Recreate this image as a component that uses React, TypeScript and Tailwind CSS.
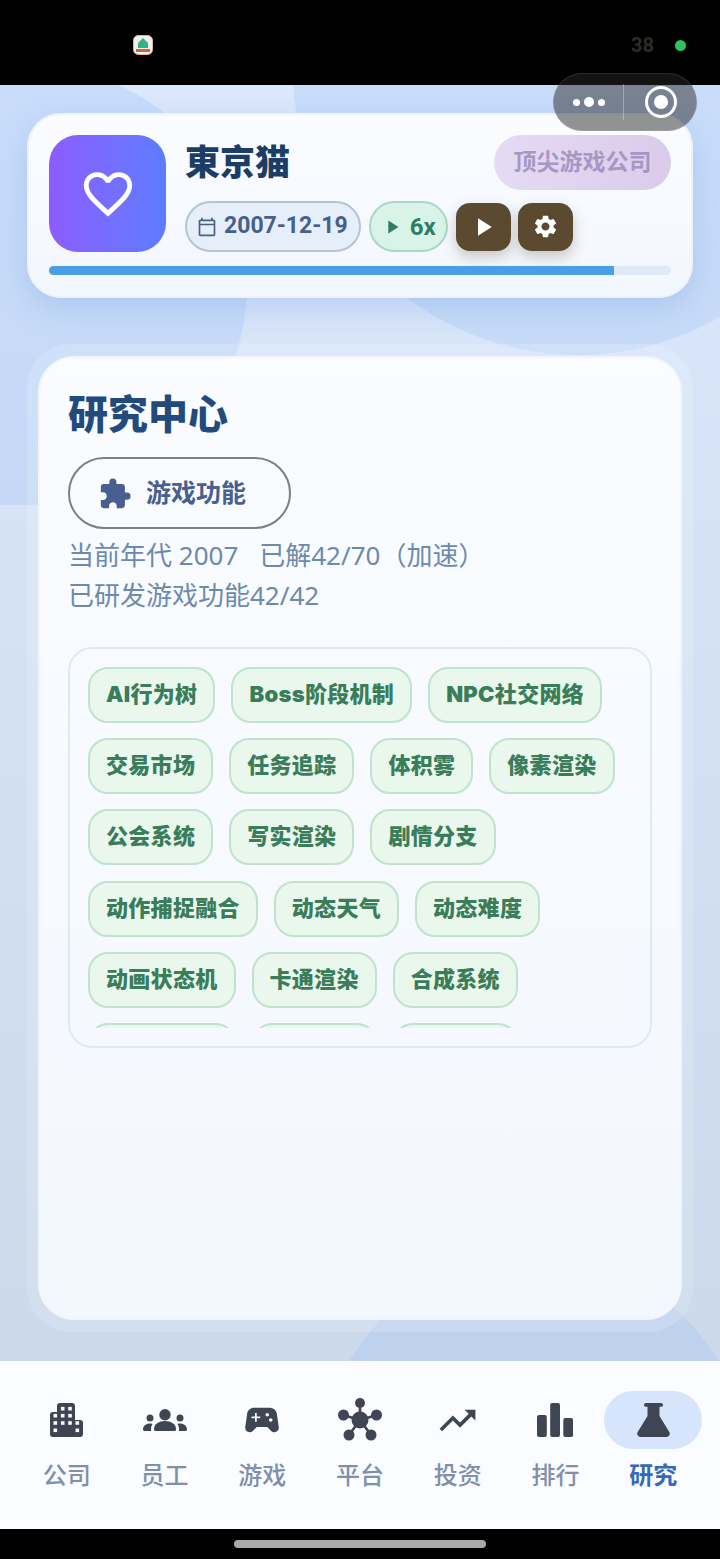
import {
  MdExtension,
  MdFavoriteBorder,
  MdOutlineCalendarToday,
  MdPlayArrow,
  MdSettings,
  MdSportsEsports,
  MdTrendingUp,
} from 'react-icons/md';

const chips = [
  'AI行为树', 'Boss阶段机制', 'NPC社交网络',
  '交易市场', '任务追踪', '体积雾', '像素渲染',
  '公会系统', '写实渲染', '剧情分支',
  '动作捕捉融合', '动态天气', '动态难度',
  '动画状态机', '卡通渲染', '合成系统',
  '回合制战斗', '多人联机', '天气系统',
];

// window cells of the building icon, [x, y] centres
const windows = [
  [12.7, 5.7], [20, 5.7],
  [5.3, 12.7], [12.7, 12.7], [20, 12.7],
  [5.3, 20], [12.7, 20], [20, 20], [27.3, 20],
  [5.3, 27.3], [27.3, 27.3],
];

function BuildingIcon() {
  return (
    <svg width="33" height="34" viewBox="0 0 33 34" fill="currentColor">
      <path d="M3 9H7V3a3 3 0 0 1 3-3h12a3 3 0 0 1 3 3V17h5a3 3 0 0 1 3 3v11a3 3 0 0 1-3 3H3a3 3 0 0 1-3-3V12a3 3 0 0 1 3-3Z" />
      {windows.map(([x, y]) => (
        <rect key={`${x}-${y}`} x={x - 1.8} y={y - 1.8} width="3.6" height="3.6" fill="#fafcff" />
      ))}
    </svg>
  );
}

function PeopleIcon() {
  return (
    <svg width="44" height="22" viewBox="0 0 44 22" fill="currentColor">
      <circle cx="22" cy="5.7" r="5.7" />
      <circle cx="7" cy="9" r="3.5" />
      <circle cx="37" cy="9" r="3.5" />
      <path d="M11 20c0-5 5-8 11-8s11 3 11 8v.5a1.5 1.5 0 0 1-1.5 1.5h-19a1.5 1.5 0 0 1-1.5-1.5Z" />
      <path d="M9.5 15c-1 1.5-1.5 3.5-1.5 5v2H1.5A1.5 1.5 0 0 1 0 20.5C0 17 3 14.5 7 14.5c1 0 1.8.1 2.5.5Z" />
      <path d="M34.500 15c1 1.500 1.500 3.500 1.500 5v2h6.500a1.500 1.500 0 0 0 1.500-1.500C44 17 41 14.500 37 14.500c-1 0-1.800.1-2.500.5Z" />
    </svg>
  );
}

function HubIcon() {
  return (
    <svg width="44" height="44" viewBox="0 0 44 44" fill="currentColor" stroke="currentColor" strokeWidth="0">
      <path d="M22 5 22 22M5 17 22 22M39 17 22 22M11 37 22 22M33 37 22 22" strokeWidth="2.600" fill="none" />
      <circle cx="22" cy="22" r="8.500" />
      <circle cx="22" cy="5" r="5" />
      <circle cx="5.500" cy="17" r="5.500" />
      <circle cx="38.500" cy="17" r="5.500" />
      <circle cx="11" cy="37" r="5.500" />
      <circle cx="33" cy="37" r="5.500" />
    </svg>
  );
}

function BarsIcon() {
  return (
    <svg width="36" height="34" viewBox="0 0 36 34" fill="currentColor">
      <rect x="0" y="12" width="9.800" height="22" rx="2" />
      <rect x="13.200" y="0" width="9.800" height="34" rx="2" />
      <rect x="26.300" y="15" width="9.800" height="19" rx="2" />
    </svg>
  );
}

function FlaskIcon() {
  return (
    <svg width="33" height="34" viewBox="0 0 33 34" fill="currentColor">
      <rect x="7" y="0" width="19" height="3.800" rx="1.900" />
      <path d="M10.500 3H22.500V13L32.300 29A3.300 3.300 0 0 1 29.500 34H3.500A3.300 3.300 0 0 1 .7 29L10.500 13Z" />
    </svg>
  );
}

const tabs = [
  { label: '公司', icon: <BuildingIcon /> },
  { label: '员工', icon: <PeopleIcon /> },
  { label: '游戏', icon: <MdSportsEsports size={42} /> },
  { label: '平台', icon: <HubIcon /> },
  { label: '投资', icon: <MdTrendingUp size={43} /> },
  { label: '排行', icon: <BarsIcon /> },
  { label: '研究', icon: <FlaskIcon />, active: true },
];

export default function App() {
  return (
    <div className="relative flex h-[1559px] w-[720px] flex-col overflow-hidden bg-black font-['Roboto','Noto_Sans_CJK_SC',sans-serif]">
      {/* status bar */}
      <div className="flex h-[85px] shrink-0 items-center pl-[133px] pr-[34px] pt-[5px]">
        <svg width="20" height="20" viewBox="0 0 20 20">
          <rect x="0.500" y="0.500" width="19" height="19" rx="5" fill="#f3efe9" stroke="#d8b9a8" />
          <path d="M10 3 15 8V13H5V8Z" fill="#2eb58a" />
          <rect x="3" y="14" width="14" height="3" fill="#d2613c" />
        </svg>
        <span className="ml-auto text-[20px] font-bold text-[#2c2c2c]">38</span>
        <div className="ml-[21px] h-[11px] w-[11px] rounded-full bg-[#2fc25f]" />
      </div>

      {/* page */}
      <div className="relative flex min-h-0 flex-1 flex-col overflow-hidden bg-gradient-to-b from-[#dbe8fd] to-[#ccd9eb] px-[27px] pt-[28px]">
        <div className="absolute left-[-307px] top-[-20px] h-[440px] w-[554px] rounded-full bg-[#a0c4f5]/30" />
        <div className="absolute left-[293px] top-[-300px] h-[570px] w-[570px] rounded-full bg-[#a0c4f5]/30" />
        <div className="absolute left-[319px] top-[1171px] h-[430px] w-[430px] rounded-full bg-[#a0c4f5]/30" />

        {/* header card */}
        <div className="relative flex h-[185px] shrink-0 flex-col rounded-[34px] border-2 border-[#edf3fd] bg-gradient-to-b from-[#fafcff] to-[#f3f7fe] px-[20px] pt-[20px] shadow-[0_10px_30px_rgba(90,140,210,0.25)]">
          <div className="flex">
            <div className="flex h-[117px] w-[117px] shrink-0 items-center justify-center rounded-[29px] bg-gradient-to-r from-[#8b5cff] to-[#5b7cff] text-white">
              <MdFavoriteBorder size={58} />
            </div>
            <div className="ml-[19px] flex min-w-0 flex-1 flex-col">
              <div className="flex h-[66px] items-start justify-between">
                <span className="mt-[6px] text-[35px] font-black leading-[46px] text-[#1c3d66]">東京猫</span>
                <span className="flex h-[55px] items-center rounded-full bg-gradient-to-r from-[#e5dbf4] to-[#dacbea] px-[19.5px] pt-[2px] text-[23px] font-bold text-[#a597c3]">
                  顶尖游戏公司
                </span>
              </div>
              <div className="flex items-center">
                <span className="flex h-[51px] items-center gap-[7px] rounded-full border-2 border-[#b4c3d8] bg-[#e6eef9] pl-[10px] pr-[11px] text-[23px] font-bold text-[#47608a]">
                  <MdOutlineCalendarToday size={20} />
                  2007-12-19
                </span>
                <span className="ml-[8px] flex h-[51px] items-center gap-[7px] rounded-full border-2 border-[#a9d9c4] bg-[#d9f3e9] px-[10px] text-[24px] font-bold text-[#2f7d64]">
                  <MdPlayArrow size={22} />
                  6x
                </span>
                <button className="ml-[8px] flex h-[48px] w-[55px] items-center justify-center rounded-[14px] bg-[#5c4a30] text-white shadow-[0_6px_14px_rgba(60,50,30,0.25)]">
                  <MdPlayArrow size={30} />
                </button>
                <button className="ml-[7px] flex h-[48px] w-[55px] items-center justify-center rounded-[14px] bg-[#5c4a30] text-white shadow-[0_6px_14px_rgba(60,50,30,0.25)]">
                  <MdSettings size={27} />
                </button>
              </div>
            </div>
          </div>
          <div className="mt-[14px] h-[9px] overflow-hidden rounded-full bg-[#dfe9f8]">
            <div className="h-full w-[90.8%] bg-[#4a9de8]" />
          </div>
        </div>

        {/* research panel */}
        <div className="relative mt-[46px] h-[988px] shrink-0 rounded-[44px] bg-white/15 px-[11px] py-[12px]">
          <div className="flex h-full flex-col rounded-[36px] border-2 border-[#f1f6fe] bg-gradient-to-b from-[#fafcff] to-[#f3f7fe] px-[28px] pt-[30px]">
            <h1 className="text-[40px] font-black leading-[56px] text-[#234a7c]">研究中心</h1>
            <div className="mt-[13px] flex h-[72px] w-[223px] shrink-0 items-center rounded-full border-2 border-[#7b7f86] pl-[28px] pt-[2px] text-[25px] font-semibold text-[#47608f]">
              <MdExtension size={34} />
              <span className="ml-[14px]">游戏功能</span>
            </div>
            <p className="mt-[6px] font-['Noto_Sans','Noto_Sans_CJK_SC',sans-serif] text-[26px] leading-[40px] text-[#6c8aab]">
              当前年代 2007<span className="ml-[21px]">已解42/70（加速）</span>
              <br />
              已研发游戏功能42/42
            </p>
            <div className="mt-[32px] h-[401px] shrink-0 rounded-[24px] border-2 border-[#dfe8f7] px-[18px] py-[18px]">
              <div className="flex h-[361px] flex-wrap content-start gap-x-[16px] gap-y-[15.2px] overflow-hidden">
                {chips.map((chip) => (
                  <span
                    key={chip}
                    className="flex h-[56px] items-center rounded-[20px] border-2 border-[#bfe3cc] bg-[#e9f7ec] px-[16px] pb-[1px] font-['Inter','Noto_Sans_CJK_SC',sans-serif] text-[22px] font-black tracking-[0.3px] text-[#3a7d5a]"
                  >
                    {chip}
                  </span>
                ))}
              </div>
            </div>
          </div>
        </div>
      </div>

      {/* bottom nav */}
      <div className="flex h-[168px] shrink-0 items-start bg-[#fafcff] px-[18px] pt-[30px]">
        {tabs.map(({ label, icon, active }) => (
          <div key={label} className="flex flex-1 flex-col items-center">
            <div className={`flex h-[58px] w-full items-center justify-center rounded-full text-[#3f4552] ${active ? 'bg-[#d6e5fb]' : ''}`}>
              {icon}
            </div>
            <span className={`mt-[10px] text-[24px] leading-[34px] ${active ? 'font-bold text-[#3568b8]' : 'font-medium text-[#7e90ab]'}`}>
              {label}
            </span>
          </div>
        ))}
      </div>

      {/* home indicator */}
      <div className="flex h-[30px] shrink-0 items-center justify-center">
        <div className="h-[8px] w-[252px] rounded-full bg-[#a8a8a8]" />
      </div>

      {/* mini program capsule */}
      <div className="absolute left-[553px] top-[73px] flex h-[58px] w-[144px] items-center rounded-full border border-white/10 bg-[#282828]/50">
        <div className="flex w-[69px] items-center justify-center gap-[4px]">
          <span className="h-[7px] w-[7px] rounded-full bg-white" />
          <span className="h-[10px] w-[10px] rounded-full bg-white" />
          <span className="h-[7px] w-[7px] rounded-full bg-white" />
        </div>
        <div className="h-[36px] w-px bg-white/30" />
        <div className="flex flex-1 items-center justify-center pl-[2px]">
          <div className="flex h-[32px] w-[32px] items-center justify-center rounded-full border-[3px] border-white">
            <span className="h-[14px] w-[14px] rounded-full bg-white" />
          </div>
        </div>
      </div>
    </div>
  );
}
